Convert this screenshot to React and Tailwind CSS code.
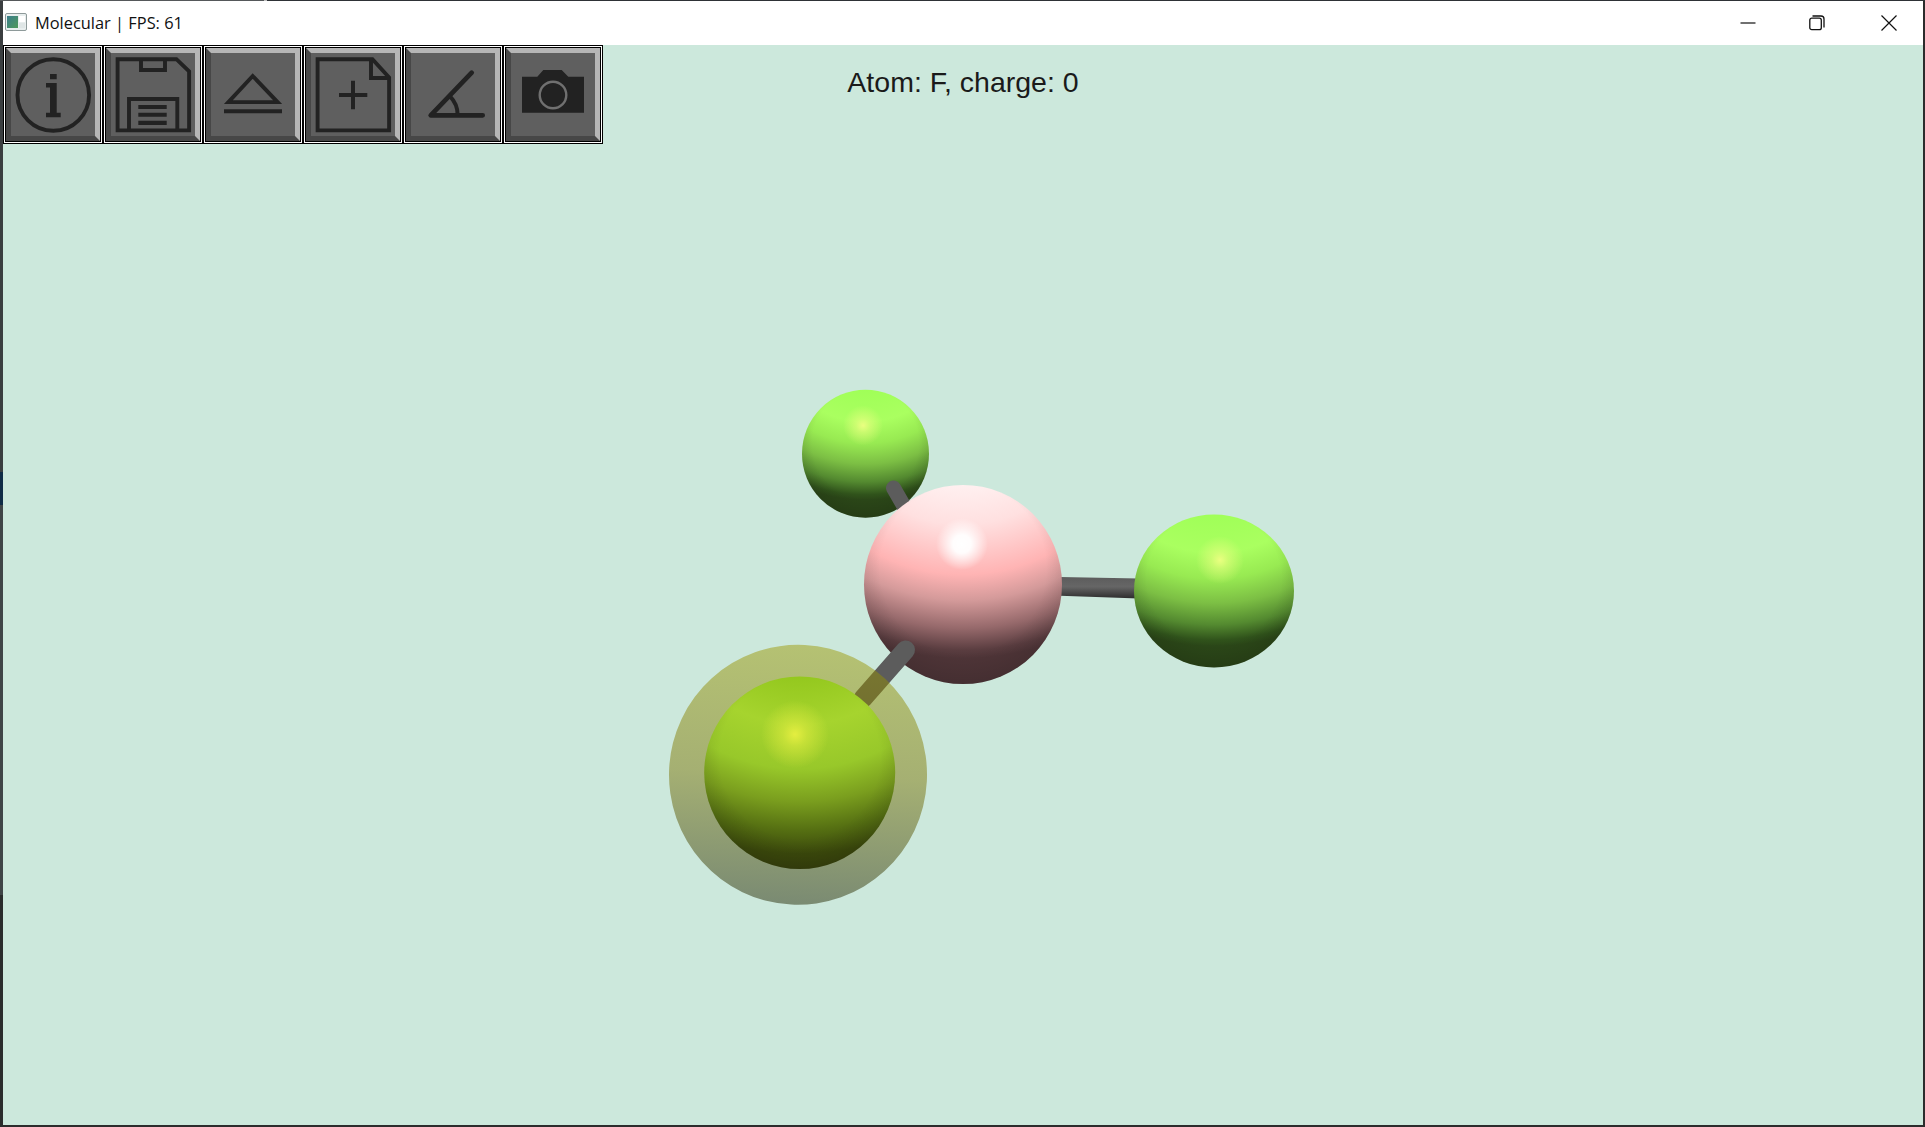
const BUTTON = 'box-border w-[100px] h-[99px] border border-black bg-white'

function ToolButton({ children }) {
  return (
    <div className={BUTTON}>
      <div className="w-full h-full border border-white">
        <div className="w-full h-full border border-black">
          <div className="w-full h-full box-border border-[5px] border-t-[#b6b6b6] border-r-[#b6b6b6] border-b-[#474747] border-l-[#474747] bg-[#5f5f5f]">
            <svg viewBox="8 8 84 83" className="w-full h-full block" fill="none" stroke="#222222" strokeWidth="3.9">
              {children}
            </svg>
          </div>
        </div>
      </div>
    </div>
  )
}

const InfoIcon = () => (
  <>
    <circle cx="50.3" cy="50" r="35.8" />
    <path fill="#222222" stroke="none" d="M47 29h6.7v5.3H47zM43 38h10.7v29.7h4v4.6H43v-4.6h4V42.5h-4z" />
  </>
)

const SaveIcon = () => (
  <>
    <path d="M14.6 14.2h58.8l12.7 12.2v59H14.6z" />
    <path d="M38 14v11h24V14M26 85.6V54h48.3v31.6" />
    <path fill="#222222" stroke="none" d="M35.3 60h28.4v4H35.3zM35.3 67.7h28.4v4H35.3zM35.3 75.7h28.4V80H35.3z" />
  </>
)

const EjectIcon = () => (
  <>
    <path d="M25.4 57.1 49.7 31 74.6 57.1z" />
    <path fill="#222222" stroke="none" d="M21 64.3h58v4H21z" />
  </>
)

const NewIcon = () => (
  <>
    <path d="M14.6 14.2h54.8l16.7 18.3v52.9H14.6z" />
    <path d="M68 14v19h18" />
    <path fill="#222222" stroke="none" d="M36 48h12V35.7h4V48h12.3v4H52v12.3h-4V52H36z" />
  </>
)

const AngleIcon = () => (
  <>
    <path d="M68.7 27.7 27.7 70.3h52" strokeWidth="4.7" strokeLinecap="round" strokeLinejoin="round" />
    <path d="M46.8 51.2a27 27 0 0 1 7.9 19.1" strokeWidth="4" />
  </>
)

const CameraIcon = () => (
  <>
    <path fill="#222222" stroke="none" d="M19 31.7h15.3L40.3 25h18.4l6.6 6.7H81v36H19z" />
    <circle cx="50" cy="50" r="13.3" stroke="#707070" strokeWidth="2.4" />
  </>
)

// top to bottom colour of the lit sphere, positions as fraction of its height
const GREEN = [[0, '#a0ff58'], [0.25, '#aaff60'], [0.42, '#98ea52'], [0.58, '#7cbf44'], [0.72, '#548a30'], [0.82, '#30531b'], [0.86, '#2b4718'], [1, '#2b4518']]
const PINK = [[0, '#fff0f0'], [0.2, '#ffe0e0'], [0.45, '#ffb4b4'], [0.58, '#d49a9a'], [0.72, '#96696b'], [0.83, '#5a3d40'], [0.87, '#4f3538'], [1, '#4e3538']]
const YELLOW = [[0, '#94c81e'], [0.25, '#a6d42e'], [0.48, '#98c82a'], [0.65, '#7a9e1e'], [0.8, '#556f12'], [0.92, '#3c4a0c'], [1, '#38420c']]

function Sphere({ id, cx, cy, rx, ry, stops, hx, hy, hr, hcolor, hmid = 0.55, edge = 0.14 }) {
  return (
    <g>
      <defs>
        <radialGradient id={`${id}-b`} cx="0.5" cy="-0.5" r="1.5">
          {stops.map(([f, c]) => <stop key={f} offset={(f + 0.5) / 1.5} stopColor={c} />)}
        </radialGradient>
        <radialGradient id={`${id}-e`} cx="0.5" cy="0.42" r="0.6">
          <stop offset="0.7" stopColor="#000" stopOpacity="0" />
          <stop offset="1" stopColor="#000" stopOpacity={edge} />
        </radialGradient>
        <radialGradient id={`${id}-h`}>
          <stop offset="0" stopColor={hcolor} stopOpacity="1" />
          <stop offset="0.35" stopColor={hcolor} stopOpacity={hmid} />
          <stop offset="1" stopColor={hcolor} stopOpacity="0" />
        </radialGradient>
      </defs>
      <ellipse cx={cx} cy={cy} rx={rx} ry={ry} fill={`url(#${id}-b)`} />
      <ellipse cx={cx} cy={cy} rx={rx} ry={ry} fill={`url(#${id}-e)`} />
      <circle cx={hx} cy={hy} r={hr} fill={`url(#${id}-h)`} />
    </g>
  )
}

function Molecule() {
  return (
    <svg viewBox="3 45 1920 1080" className="w-full h-full block">
      <defs>
        <linearGradient id="halo" x1="0" y1="0" x2="0" y2="1">
          <stop offset="0" stopColor="#9c9800" stopOpacity="0.48" />
          <stop offset="0.5" stopColor="#7b7300" stopOpacity="0.48" />
          <stop offset="1" stopColor="#212500" stopOpacity="0.48" />
        </linearGradient>
        <linearGradient id="bond-h" x1="0" y1="0" x2="0" y2="1">
          <stop offset="0" stopColor="#5c5c5c" />
          <stop offset="0.45" stopColor="#666666" />
          <stop offset="1" stopColor="#2c2c2c" />
        </linearGradient>
      </defs>

      <Sphere id="top" cx={865.5} cy={453.7} rx={63.5} ry={64} stops={GREEN} hx={863} hy={425.4} hr={20} hcolor="#eaff80" />
      <path d="M893.5 488 905 508" stroke="#5c5c5c" strokeWidth="15" strokeLinecap="round" />

      <path d="M1060 577 1139 578.6V598.6L1060 595.7z" fill="url(#bond-h)" />
      <Sphere id="right" cx={1214} cy={591} rx={80} ry={76.5} stops={GREEN} hx={1220} hy={560} hr={24} hcolor="#eaff80" />

      <Sphere id="pink" cx={963} cy={584.5} rx={99} ry={99.6} stops={PINK} hx={962} hy={544} hr={26} hcolor="#ffffff" hmid={0.95} />
      <path d="M905.5 650 863 698.5" stroke="#5c5c5c" strokeWidth="19" strokeLinecap="round" />

      <ellipse cx={798} cy={774.8} rx={129} ry={130} fill="url(#halo)" transform="rotate(3 798 775)" />
      <Sphere id="yellow" cx={799.7} cy={772.7} rx={95.5} ry={96.3} stops={YELLOW} hx={795} hy={734.3} hr={34} hcolor="#e4ee40" />
    </svg>
  )
}

export default function App() {
  return (
    <div className="relative w-[1925px] h-[1127px] overflow-hidden bg-[#2c2c2c] pt-px pl-[3px] pr-[2px] pb-[2px] flex flex-col">
      {/* desktop showing through the window's edge */}
      <div className="absolute top-0 left-0 w-[3px] h-full flex flex-col">
        <div className="h-[472px] bg-[#3a3e40]" />
        <div className="h-[33px] bg-[#0f2c46]" />
        <div className="h-[390px] bg-[#3f4547]" />
        <div className="flex-1 bg-[#2a2c2c]" />
      </div>
      <div className="absolute top-0 left-0 w-full h-px flex">
        <div className="w-[264px] bg-[#55585a]" />
        <div className="w-[3px] bg-[#c0c0c0]" />
        <div className="flex-1 bg-[#2e3236]" />
      </div>

      {/* title bar */}
      <div className="h-[44px] shrink-0 bg-white flex items-center pl-[2px] font-['Open_Sans',sans-serif] text-[16.4px] text-[#111111]">
        <svg width="22" height="18" viewBox="0 0 22 18" className="shrink-0 -mt-[2px]">
          <defs>
            <linearGradient id="winicon" x1="0" y1="0" x2="1" y2="1">
              <stop offset="0" stopColor="#3a7d8c" />
              <stop offset="1" stopColor="#4f9a5a" />
            </linearGradient>
          </defs>
          <rect x="0.5" y="0.5" width="21" height="17" rx="1.5" fill="#e8eeee" stroke="#8e9a9a" />
          <rect x="2" y="3" width="11" height="12" fill="url(#winicon)" />
          <rect x="14" y="3" width="6" height="6" fill="#ffffff" />
          <rect x="14" y="10" width="6" height="5" fill="#dfe6e6" />
        </svg>
        <span className="ml-[8px]">Molecular | FPS: 61</span>
        <div className="ml-auto flex items-center h-full -mt-[1px]">
          <div className="w-[68px] flex justify-center">
            <svg width="16" height="2" viewBox="0 0 16 2" stroke="#111" strokeWidth="1.2">
              <path d="M0.5 1h15" />
            </svg>
          </div>
          <div className="w-[72px] pr-[2px] flex justify-center">
            <svg width="16" height="16" viewBox="0 0 16 16" fill="none" stroke="#111" strokeWidth="1.3">
              <rect x="0.8" y="3.2" width="11.5" height="11.5" rx="2" />
              <path d="M3.5 1h8.5a3 3 0 0 1 3 3v8.5" />
            </svg>
          </div>
          <div className="w-[69px] flex justify-center">
            <svg width="16" height="16" viewBox="0 0 16 16" fill="none" stroke="#111" strokeWidth="1.2">
              <path d="M0.5 0.5 15.5 15.5M15.5 0.5 0.5 15.5" />
            </svg>
          </div>
        </div>
      </div>

      {/* 3d view */}
      <div className="relative flex-1 bg-[#cce8dc]">
        <Molecule />
        <div className="absolute top-0 left-0 flex">
          <ToolButton><InfoIcon /></ToolButton>
          <ToolButton><SaveIcon /></ToolButton>
          <ToolButton><EjectIcon /></ToolButton>
          <ToolButton><NewIcon /></ToolButton>
          <ToolButton><AngleIcon /></ToolButton>
          <ToolButton><CameraIcon /></ToolButton>
        </div>
        <div className="absolute top-[16px] left-0 right-0 text-center font-['Liberation_Sans',sans-serif] text-[28.5px] leading-[42px] text-[#1a1a1a]">
          Atom: F, charge: 0
        </div>
      </div>
    </div>
  )
}
